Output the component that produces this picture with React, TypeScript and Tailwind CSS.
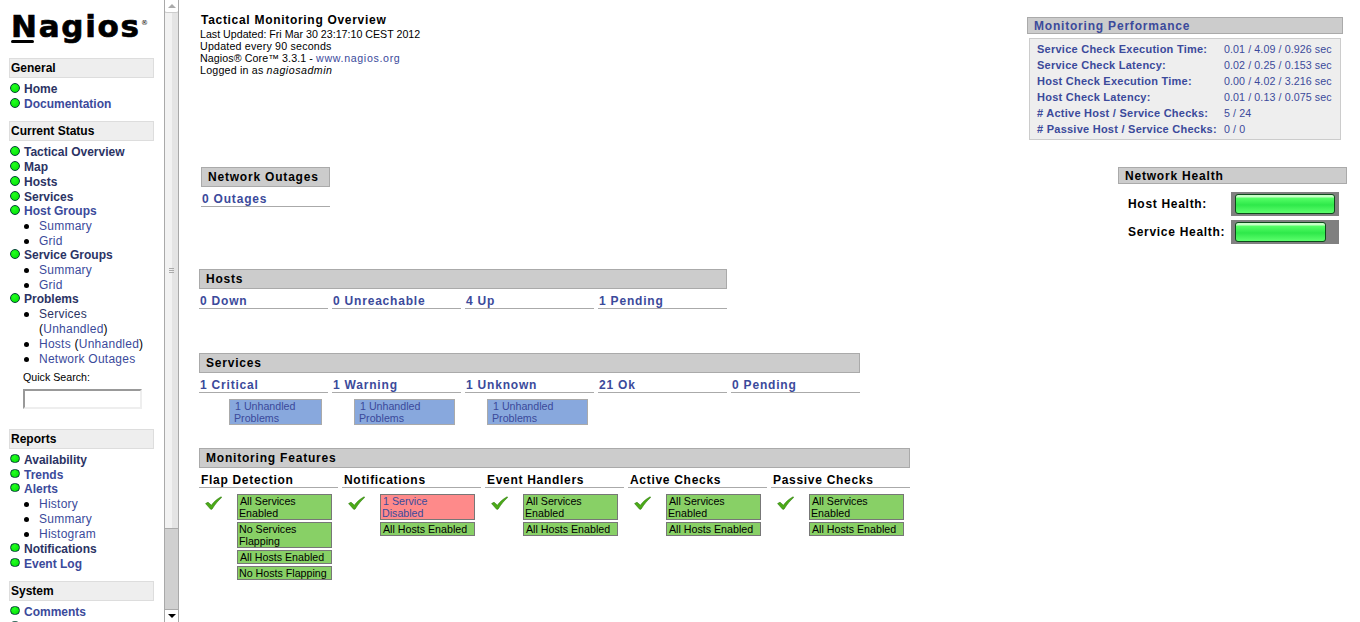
const sans = "font-['Liberation_Sans',Arial,sans-serif]";

type NavItem = { label: string; dark?: boolean; tight?: boolean };

function Bullet() {
  return (
    <span className="mt-[1px] h-[9.5px] w-[9.5px] shrink-0 rounded-full border border-[#043] bg-[radial-gradient(circle_at_40%_35%,#22ff22,#00dd00)]" />
  );
}

function NavRow({ label, dark, tight }: NavItem) {
  return (
    <div className={`flex h-[15px] pl-[10px] ${tight ? "-mt-px" : ""}`}>
      <Bullet />
      <a className={`ml-[4.5px] text-[12px] font-bold leading-[15px] ${dark ? "text-[#2b3364]" : "text-[#3b4a9b]"}`}>{label}</a>
    </div>
  );
}

function SubRow({ children }: { children: React.ReactNode }) {
  return (
    <div className="relative pl-[39px] text-[12px] leading-[15px] tracking-[0.25px] text-[#3b4a9b]">
      <span className="absolute left-[24px] top-[5px] h-[5px] w-[5px] rounded-full bg-black" />
      {children}
    </div>
  );
}

function NavHead({ title, top }: { title: string; top: string }) {
  return (
    <div className={`ml-[9px] flex h-[20px] w-[145px] items-center border border-[#ddd] bg-[#eee] pl-[1px] text-[12px] font-bold text-black ${top}`}>
      {title}
    </div>
  );
}

function Sidebar() {
  return (
    <aside className="h-[622px] w-[164px] shrink-0 overflow-hidden">
      <div className="h-[58px] pl-[11px] pt-[8px]">
        <div className="relative w-[136px] font-['DejaVu_Sans',sans-serif] text-[31px] font-bold leading-[36px] tracking-[1.7px] text-black [-webkit-text-stroke:0.7px_black]">
          Nagios
          <span className="absolute left-[130px] top-[-3px] text-[7px] font-normal tracking-normal [-webkit-text-stroke:0]">®</span>
          <span className="absolute left-0 top-[32px] h-[3px] w-[23px] rounded-full bg-black" />
        </div>
      </div>
      <NavHead title="General" top="" />
      <div className="mt-[4px]">
        <NavRow label="Home" dark />
        <NavRow label="Documentation" />
      </div>
      <NavHead title="Current Status" top="mt-[9px]" />
      <div className="mt-[4px]">
        <NavRow label="Tactical Overview" dark />
        <NavRow label="Map" dark />
        <NavRow label="Hosts" dark />
        <NavRow label="Services" dark />
        <NavRow label="Host Groups" tight />
        <SubRow>Summary</SubRow>
        <SubRow>Grid</SubRow>
        <NavRow label="Service Groups" dark tight />
        <SubRow>Summary</SubRow>
        <SubRow>Grid</SubRow>
        <NavRow label="Problems" dark tight />
        <SubRow><span className="text-[#2b3364]">Services</span></SubRow>
        <div className="pl-[39px] text-[12px] leading-[15px] tracking-[0.25px] text-black">
          (<span className="text-[#3b4a9b]">Unhandled</span>)
        </div>
        <SubRow>Hosts <span className="text-black">(</span>Unhandled<span className="text-black">)</span></SubRow>
        <SubRow>Network Outages</SubRow>
      </div>
      <div className="mt-[3px] pl-[23px] text-[10.67px] leading-[15px] text-black">Quick Search:</div>
      <input
        aria-label="Quick Search"
        className="ml-[23px] mt-[4px] block h-[19.5px] w-[119px] border-2 border-b-[#eee] border-l-[#999] border-r-[#eee] border-t-[#999] bg-white"
      />
      <NavHead title="Reports" top="mt-[20px]" />
      <div className="mt-[4px]">
        <NavRow label="Availability" dark />
        <NavRow label="Trends" />
        <NavRow label="Alerts" tight />
        <SubRow>History</SubRow>
        <SubRow>Summary</SubRow>
        <SubRow>Histogram</SubRow>
        <NavRow label="Notifications" dark />
        <NavRow label="Event Log" />
      </div>
      <NavHead title="System" top="mt-[9px]" />
      <div className="mt-[4px]">
        <NavRow label="Comments" />
        {/* next row is cut off by the frame, only the top of its bullet shows */}
        <div className="flex h-[15px] pl-[10px]"><Bullet /></div>
      </div>
    </aside>
  );
}

function Scrollbar() {
  return (
    <div className="flex h-[622px] w-[15px] shrink-0 flex-col border-x border-[#a9a9a9] bg-[#d0d0d0]">
      <div className="flex h-[13px] items-center justify-center rounded-b-[2px] border-b border-[#ccc] bg-white">
        <span className="h-0 w-0 border-x-[4px] border-b-[4px] border-x-transparent border-b-[#aaa]" />
      </div>
      <div className="flex h-[516px] flex-col items-center justify-center gap-[1px] border-b border-[#aaa] bg-[linear-gradient(90deg,#f2f2f2,#f2f2f2_50%,#e4e4e4_50%,#e4e4e4)]">
        <span className="h-px w-[5px] bg-[#aaa]" />
        <span className="h-px w-[5px] bg-[#aaa]" />
        <span className="h-px w-[5px] bg-[#aaa]" />
      </div>
      <div className="flex-1" />
      <div className="flex h-[13px] items-center justify-center border-t border-[#aaa] bg-white">
        <span className="h-0 w-0 border-x-[4px] border-t-[4px] border-x-transparent border-t-black" />
      </div>
    </div>
  );
}

function SectionHead({ title, width }: { title: string; width: string }) {
  return (
    <div className={`flex h-[20px] items-center border border-[#aaa] bg-[#ccc] pl-[6px] text-[12px] font-bold tracking-[0.8px] text-black ${width}`}>
      {title}
    </div>
  );
}

function StatCell({ label }: { label: string }) {
  return (
    <div className="h-[20px] w-[129px] border-b border-[#aaa] pl-[1px] pt-[4px] text-[12px] font-bold leading-[16px] tracking-[0.8px] text-[#3b4a9b]">
      {label}
    </div>
  );
}

function Perf() {
  const rows = [
    ["Service Check Execution Time:", "0.01 / 4.09 / 0.926 sec"],
    ["Service Check Latency:", "0.02 / 0.25 / 0.153 sec"],
    ["Host Check Execution Time:", "0.00 / 4.02 / 3.216 sec"],
    ["Host Check Latency:", "0.01 / 0.13 / 0.075 sec"],
    ["# Active Host / Service Checks:", "5 / 24"],
    ["# Passive Host / Service Checks:", "0 / 0"],
  ];
  return (
    <div className="w-[316px] pt-[3px]">
      <div className="flex h-[17px] items-center border border-[#aaa] bg-[#ccc] pl-[6px] text-[12px] font-bold tracking-[0.8px] text-[#3b4a9b]">
        Monitoring Performance
      </div>
      <div className="ml-[2px] mt-[4px] h-[102px] w-[312px] border border-[#ccc] bg-[#eee] pl-[7px] pt-[2px] text-[#3b4a9b]">
        {rows.map(([k, v]) => (
          <div key={k} className="flex h-[16px] items-center">
            <span className="w-[187px] whitespace-nowrap text-[11px] font-bold tracking-[0.25px]">{k}</span>
            <span className="text-[10.67px] tracking-[0.1px]">{v}</span>
          </div>
        ))}
      </div>
    </div>
  );
}

function Gauge({ width }: { width: string }) {
  return (
    <div className="flex h-[24px] w-[108px] items-center bg-[#808080] pl-[4px]">
      <div className={`h-[20px] rounded-[3px] border border-[#0d4a1a] bg-[linear-gradient(180deg,#c8ffc8_0,#c8ffc8_2px,#55ff66_3px,#2ee84a_55%,#5cff6c_100%)] ${width}`} />
    </div>
  );
}

function Check() {
  return (
    <svg width="17" height="14" viewBox="0 0 17 14" className="shrink-0">
      <path d="M0.6 7.6 L3 6.2 L6.4 9.2 C8.8 5.8 12 3 16.2 0.8 L16.6 1.6 C13 4.6 10 8.4 7 13.2 L5.6 13.2 Z" fill="#4cab17" stroke="#2a7a0a" strokeWidth="0.6" strokeLinejoin="round" />
    </svg>
  );
}

type Badge = { text: string; bad?: boolean };

function Feature({ title, badges }: { title: string; badges: Badge[] }) {
  return (
    <div className="w-[139px]">
      <div className="h-[20px] border-b border-[#aaa] pl-[2px] pt-[4px] text-[12px] font-bold leading-[16px] tracking-[0.7px] text-black">
        {title}
      </div>
      <div className="mt-[6px] flex">
        <div className="w-[38px] pl-[6px] pt-[2px]"><Check /></div>
        <div className="flex w-[95px] flex-col gap-[2px]">
          {badges.map((b) => (
            <div
              key={b.text}
              className={`border border-[#777] text-[10.67px] leading-[12px] ${b.text.startsWith("No") ? "pl-[1px]" : "pl-[1px] indent-[1px]"} ${b.bad ? "pr-[12px] bg-[#fe8a8a] text-[#3b4a9b]" : "bg-[#88d066] text-black"}`}
            >
              {b.text}
            </div>
          ))}
        </div>
      </div>
    </div>
  );
}

function Unhandled({ box }: { box: string }) {
  return (
    <div className={`mt-[6px] h-[26px] border border-[#aaa] bg-[#88a8dd] pl-[4px] text-[10.67px] leading-[12px] text-[#3b4a9b] indent-[1px] ${box}`}>
      1 Unhandled Problems
    </div>
  );
}

export default function App() {
  const enabled = [{ text: "All Services Enabled" }, { text: "All Hosts Enabled" }];
  return (
    <div className={`flex h-[622px] w-[1360px] overflow-hidden bg-white ${sans}`}>
      <Sidebar />
      <Scrollbar />
      <main className="min-w-0 flex-1">
        <div className="flex h-[167px] justify-between pl-[21px] pr-[17px] pt-[14px]">
          <div className="text-[10.67px] leading-[12px] text-black">
            <div className="mb-[2px] ml-px text-[12px] font-bold leading-[12px] tracking-[0.7px]">Tactical Monitoring Overview</div>
            <div>Last Updated: Fri Mar 30 23:17:10 CEST 2012</div>
            <div className="tracking-[0.2px]">Updated every 90 seconds</div>
            <div className="tracking-[0.1px]">Nagios® Core™ 3.3.1 - <a className="tracking-[0.65px] text-[#3b4a9b]">www.nagios.org</a></div>
            <div className="tracking-[0.2px]">Logged in as <i className="tracking-[0.5px]">nagiosadmin</i></div>
          </div>
          <Perf />
        </div>
        <div className="flex h-[102px] justify-between pl-[22px] pr-[13px]">
          <div className="w-[129px]">
            <SectionHead title="Network Outages" width="w-[129px]" />
            <StatCell label="0 Outages" />
          </div>
          <div className="w-[229px]">
            <div className="flex h-[17px] items-center border border-[#aaa] bg-[#ccc] pl-[6px] text-[12px] font-bold tracking-[0.8px] text-black">
              Network Health
            </div>
            <div className="mt-[8px] flex items-center">
              <span className="w-[113px] pl-[10px] text-[12px] font-bold tracking-[0.7px]">Host Health:</span>
              <Gauge width="w-[100px]" />
            </div>
            <div className="mt-[4px] flex items-center">
              <span className="w-[113px] pl-[10px] text-[12px] font-bold tracking-[0.7px]">Service Health:</span>
              <Gauge width="w-[91px]" />
            </div>
          </div>
        </div>
        <div className="h-[84px] pl-[20px]">
          <SectionHead title="Hosts" width="w-[528px]" />
          <div className="flex gap-[4px]">
            {["0 Down", "0 Unreachable", "4 Up", "1 Pending"].map((l) => <StatCell key={l} label={l} />)}
          </div>
        </div>
        <div className="h-[95px] pl-[20px]">
          <SectionHead title="Services" width="w-[661px]" />
          <div className="flex gap-[4px]">
            <div><StatCell label="1 Critical" /><Unhandled box="ml-[30px] w-[93px]" /></div>
            <div><StatCell label="1 Warning" /><Unhandled box="ml-[22px] w-[101px]" /></div>
            <div><StatCell label="1 Unknown" /><Unhandled box="ml-[22px] w-[101px]" /></div>
            <StatCell label="21 Ok" />
            <StatCell label="0 Pending" />
          </div>
        </div>
        <div className="pl-[20px]">
          <SectionHead title="Monitoring Features" width="w-[711px]" />
          <div className="flex gap-[4px]">
            <Feature
              title="Flap Detection"
              badges={[
                { text: "All Services Enabled" },
                { text: "No Services Flapping" },
                { text: "All Hosts Enabled" },
                { text: "No Hosts Flapping" },
              ]}
            />
            <Feature title="Notifications" badges={[{ text: "1 Service Disabled", bad: true }, { text: "All Hosts Enabled" }]} />
            <Feature title="Event Handlers" badges={enabled} />
            <Feature title="Active Checks" badges={enabled} />
            <Feature title="Passive Checks" badges={enabled} />
          </div>
        </div>
      </main>
    </div>
  );
}
